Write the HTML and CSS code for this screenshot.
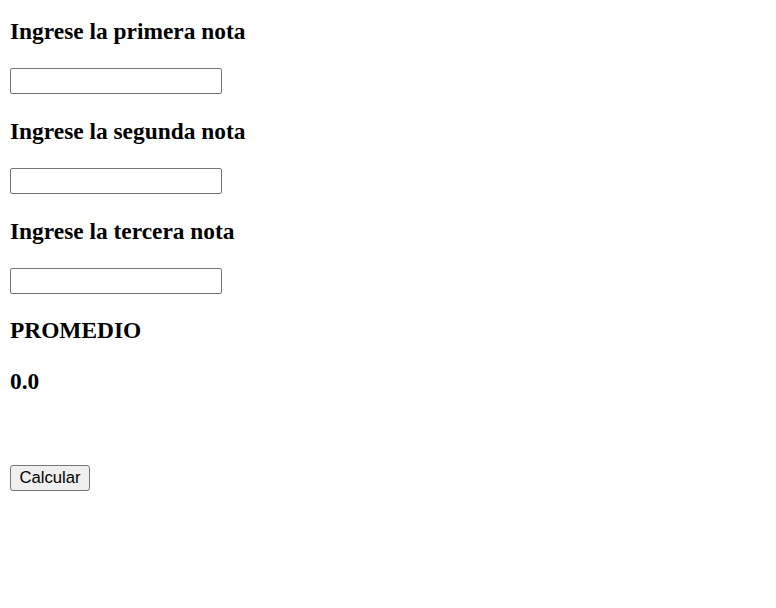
FILE: index.html
```html
<!DOCTYPE html>
<html lang="es">
<head>
<meta charset="utf-8">
<title>Promedio</title>
<link rel="stylesheet" href="styles.css">
</head>
<body>
<form class="grade-form">
  <h3 class="label first">Ingrese la primera nota</h3>
  <input class="field" type="text">
  <h3 class="label">Ingrese la segunda nota</h3>
  <input class="field" type="text">
  <h3 class="label">Ingrese la tercera nota</h3>
  <input class="field" type="text">
  <h3 class="label">PROMEDIO</h3>
  <h3 class="label">0.0</h3>
  <div class="actions">
    <button class="btn" type="button">Calcular</button>
  </div>
</form>
</body>
</html>
```
FILE: styles.css
```css
html, body {
  margin: 0;
  padding: 0;
  background: #ffffff;
}
body {
  padding: 0 10px;
  font-family: "Liberation Serif", "Times New Roman", serif;
  color: #000;
}
.grade-form {
  display: block;
  padding-top: 1px;
}
.label {
  font-family: "Liberation Serif", "Times New Roman", serif;
  font-size: 23.4px;
  font-weight: bold;
  line-height: 27px;
  margin: 23.4px 0;
}
.label.first {
  margin-top: 17px;
}
.field {
  display: block;
  box-sizing: border-box;
  width: 212px;
  height: 26px;
  margin: 0;
  padding: 1px 2px;
  border: 1px solid #767676;
  border-radius: 2px;
  background: #fff;
  font-family: "Liberation Sans", Arial, sans-serif;
  font-size: 16.7px;
}
.actions {
  padding-top: 47px;
}
.btn {
  display: block;
  box-sizing: border-box;
  width: 80px;
  height: 26px;
  margin: 0;
  padding: 0 6px;
  border: 1px solid #767676;
  border-radius: 3px;
  background: #efefef;
  color: #000;
  font-family: "Liberation Sans", Arial, sans-serif;
  font-size: 16.7px;
}
```
